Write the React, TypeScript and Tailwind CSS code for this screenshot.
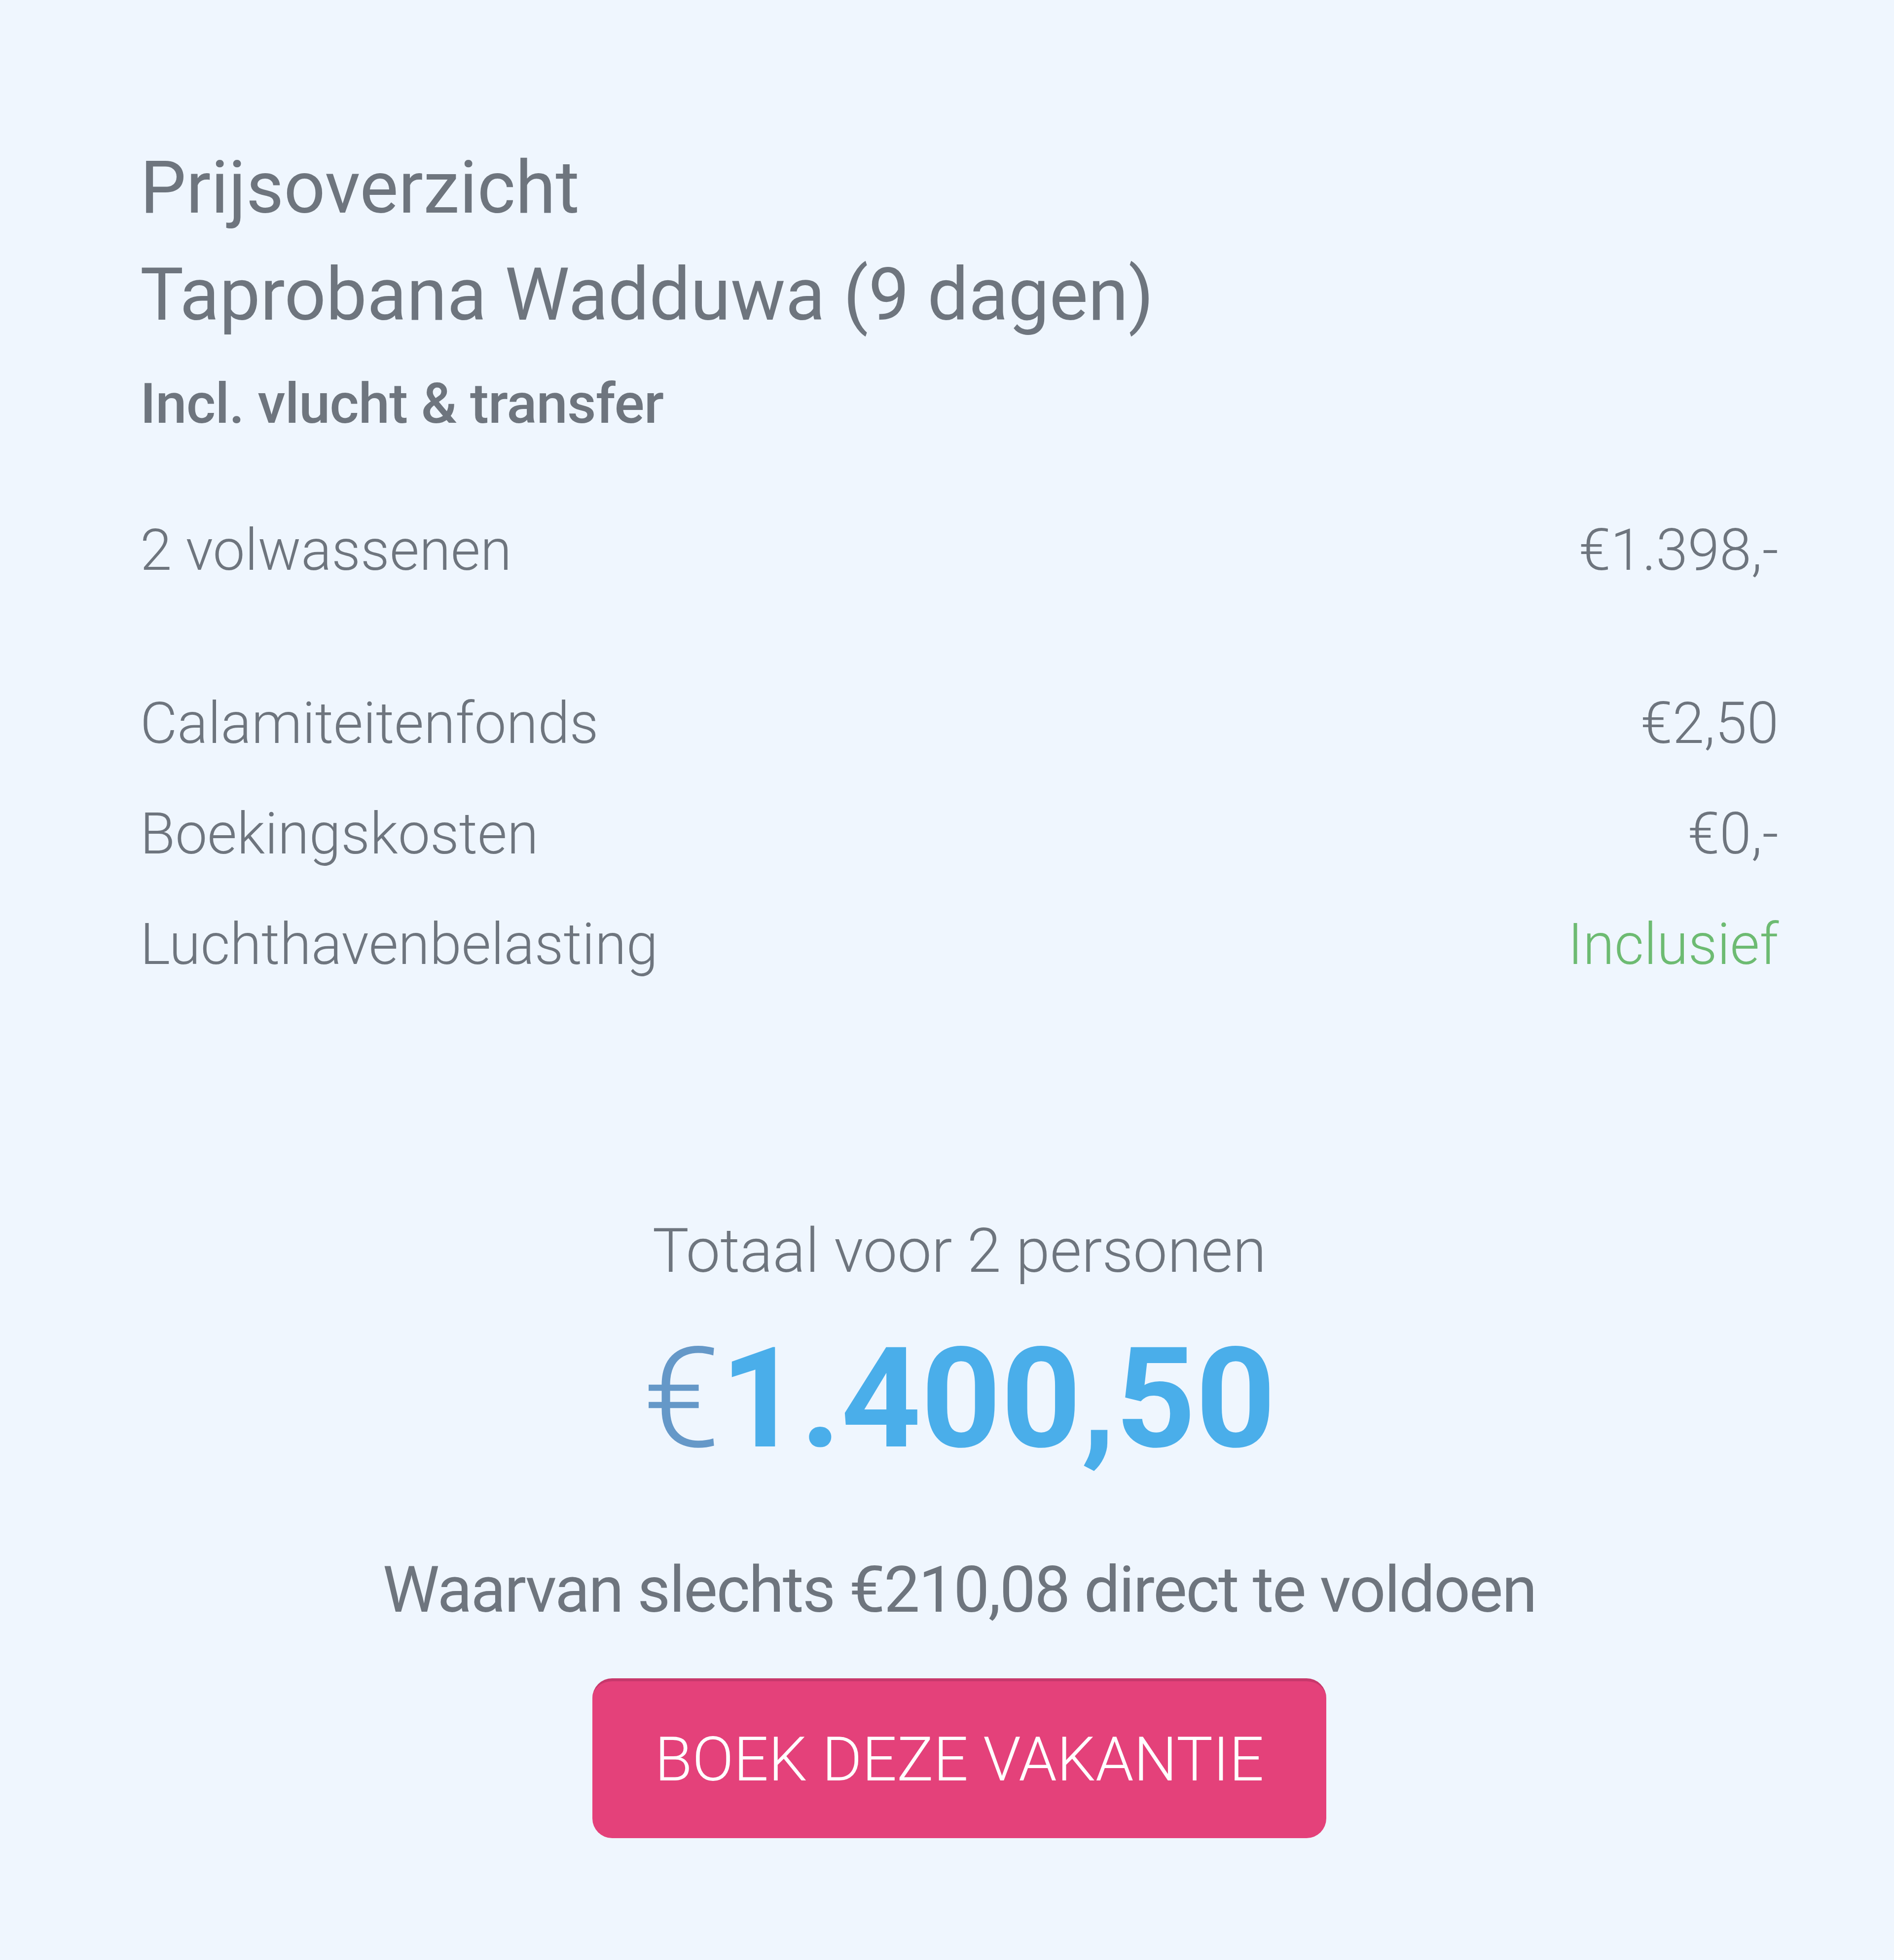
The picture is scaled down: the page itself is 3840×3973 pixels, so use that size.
const rows = [
  { label: "Calamiteitenfonds", value: "€2,50" },
  { label: "Boekingskosten", value: "€0,-" },
  { label: "Luchthavenbelasting", value: "Inclusief", included: true },
];

function PriceRow({ label, value, included }: { label: string; value: string; included?: boolean }) {
  return (
    <div className="flex items-center justify-between text-[116px] leading-[224px] font-light">
      <span>{label}</span>
      <span className={included ? "text-[#6dbb72]" : ""}>{value}</span>
    </div>
  );
}

export default function App() {
  return (
    <div className="min-h-[3973px] w-full bg-[#eff6fe] pt-[272px] pb-[249px] pl-[284px] pr-[234px] font-['Roboto',sans-serif] text-[#6e757e]">
      <div className="text-[148px] leading-[217px]">
        <h1>Prijsoverzicht</h1>
        <h2>Taprobana Wadduwa (9 dagen)</h2>
      </div>
      <p className="mt-[32px] text-[114px] leading-[160px] font-medium tracking-[-1px]">
        Incl. vlucht &amp; transfer
      </p>

      <div className="mt-[105px]">
        <PriceRow label="2 volwassenen" value="€1.398,-" />
      </div>

      <div className="mt-[127px]">
        {rows.map((row) => (
          <PriceRow key={row.label} {...row} />
        ))}
      </div>

      <div className="mt-[430px] flex flex-col items-center">
        <p className="text-[124px] leading-[160px] font-light">Totaal voor 2 personen</p>
        <p className="mt-[69px] text-[283px] leading-[300px] font-bold text-[#4aaeea]">
          <span className="font-light text-[#6598c8]">€</span>1.400,50
        </p>
        <p className="mt-[158px] text-[130px] leading-[160px] tracking-[-2.5px]">
          Waarvan slechts €210,08 direct te voldoen
        </p>
        <button
          type="button"
          className="mt-[99px] flex h-[324px] w-[1488px] items-center justify-center rounded-[40px] border-t-[6px] border-[#c7386c] bg-[#e4417a] text-[124px] font-light text-white"
        >
          BOEK DEZE VAKANTIE
        </button>
      </div>
    </div>
  );
}
